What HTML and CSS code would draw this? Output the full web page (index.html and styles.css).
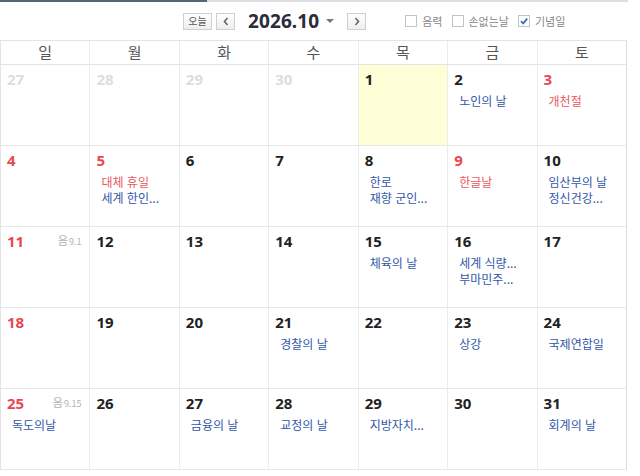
FILE: index.html
```html
<!DOCTYPE html>
<html lang="ko">
<head>
<meta charset="utf-8">
<title>2026.10 달력</title>
<link rel="stylesheet" href="styles.css">
</head>
<body>
<div class="topbar"><div class="topbar-fill"></div></div>
<div class="toolbar">
  <button class="btn btn-today">오늘</button>
  <button class="btn btn-arrow">
    <svg width="8" height="9" viewBox="0 0 8 9"><path d="M5.5 1 L2.5 4.5 L5.5 8" fill="none" stroke="#666" stroke-width="1.6"/></svg>
  </button>
  <div class="title">2026.10</div>
  <span class="caret"></span>
  <button class="btn btn-arrow">
    <svg width="8" height="9" viewBox="0 0 8 9"><path d="M2.5 1 L5.5 4.5 L2.5 8" fill="none" stroke="#666" stroke-width="1.6"/></svg>
  </button>
  <div class="checks">
    <label class="check"><span class="box"></span>음력</label>
    <label class="check"><span class="box"></span>손없는날</label>
    <label class="check"><span class="box checked"><svg width="10" height="10" viewBox="0 0 10 10"><path d="M2 5.2 L4.2 7.4 L8.2 2.6" fill="none" stroke="#3b6fc4" stroke-width="1.8"/></svg></span>기념일</label>
  </div>
</div>
<div class="cal">
  <div class="wd">일</div><div class="wd">월</div><div class="wd">화</div><div class="wd">수</div><div class="wd">목</div><div class="wd">금</div><div class="wd">토</div>

  <div class="day"><div class="num other">27</div></div>
  <div class="day"><div class="num other">28</div></div>
  <div class="day"><div class="num other">29</div></div>
  <div class="day"><div class="num other">30</div></div>
  <div class="day today"><div class="num">1</div></div>
  <div class="day"><div class="num">2</div><div class="ev">노인의 날</div></div>
  <div class="day"><div class="num red">3</div><div class="ev hol">개천절</div></div>

  <div class="day"><div class="num red">4</div></div>
  <div class="day"><div class="num red">5</div><div class="ev hol">대체 휴일</div><div class="ev">세계 한인...</div></div>
  <div class="day"><div class="num">6</div></div>
  <div class="day"><div class="num">7</div></div>
  <div class="day"><div class="num">8</div><div class="ev">한로</div><div class="ev">재향 군인...</div></div>
  <div class="day"><div class="num red">9</div><div class="ev hol">한글날</div></div>
  <div class="day"><div class="num">10</div><div class="ev">임산부의 날</div><div class="ev">정신건강...</div></div>

  <div class="day"><div class="head"><div class="num red">11</div><div class="lunar">음<span class="ln">9.1</span></div></div></div>
  <div class="day"><div class="num">12</div></div>
  <div class="day"><div class="num">13</div></div>
  <div class="day"><div class="num">14</div></div>
  <div class="day"><div class="num">15</div><div class="ev">체육의 날</div></div>
  <div class="day"><div class="num">16</div><div class="ev">세계 식량...</div><div class="ev">부마민주...</div></div>
  <div class="day"><div class="num">17</div></div>

  <div class="day"><div class="num red">18</div></div>
  <div class="day"><div class="num">19</div></div>
  <div class="day"><div class="num">20</div></div>
  <div class="day"><div class="num">21</div><div class="ev">경찰의 날</div></div>
  <div class="day"><div class="num">22</div></div>
  <div class="day"><div class="num">23</div><div class="ev">상강</div></div>
  <div class="day"><div class="num">24</div><div class="ev">국제연합일</div></div>

  <div class="day"><div class="head"><div class="num red">25</div><div class="lunar">음<span class="ln">9.15</span></div></div><div class="ev">독도의날</div></div>
  <div class="day"><div class="num">26</div></div>
  <div class="day"><div class="num">27</div><div class="ev">금융의 날</div></div>
  <div class="day"><div class="num">28</div><div class="ev">교정의 날</div></div>
  <div class="day"><div class="num">29</div><div class="ev">지방자치...</div></div>
  <div class="day"><div class="num">30</div></div>
  <div class="day"><div class="num">31</div><div class="ev">회계의 날</div></div>
</div>
</body>
</html>
```
FILE: styles.css
```css
* { box-sizing: border-box; }
body {
  margin: 0;
  background: #fff;
  font-family: "Noto Sans CJK KR", "Noto Sans", sans-serif;
  color: #222;
}
.topbar {
  height: 2px;
  width: 628px;
  background: #dcdfe3;
}
.topbar-fill {
  width: 207px;
  height: 2px;
  background: #56647a;
}
.toolbar {
  height: 38px;
  display: flex;
  align-items: center;
  padding-left: 183px;
}
.btn {
  height: 17px;
  border: 1px solid #cfcfcf;
  background: linear-gradient(#ffffff, #eeeeee);
  padding: 0;
  display: flex;
  align-items: center;
  justify-content: center;
  font-family: "Noto Sans CJK KR", sans-serif;
  font-size: 10px;
  color: #555;
  line-height: 1;
}
.btn-today { width: 29px; margin-right: 4px; }
.btn-arrow { width: 19px; }
.title {
  margin-left: 13px;
  font-family: "Noto Sans", "Noto Sans CJK KR", sans-serif;
  font-weight: 700;
  font-size: 19px;
  line-height: 22px;
  color: #2c2c3a;
  letter-spacing: 0.1px;
}
.caret {
  width: 0;
  height: 0;
  border-left: 4px solid transparent;
  border-right: 4px solid transparent;
  border-top: 4px solid #777;
  margin: 0 13px 0 7px;
}
.checks {
  display: flex;
  align-items: center;
  margin-left: 39px;
  gap: 9px;
}
.check {
  display: flex;
  align-items: center;
  font-size: 11px;
  color: #888;
  line-height: 14px;
}
.box {
  width: 12px;
  height: 12px;
  border: 1px solid #c3c3c3;
  background: #fff;
  margin-right: 5px;
  display: flex;
  align-items: center;
  justify-content: center;
}
.cal {
  width: 627px;
  display: grid;
  grid-template-columns: repeat(7, 1fr);
  grid-template-rows: 24px repeat(5, 81px);
  border-left: 1px solid #e4e4e4;
  border-top: 1px solid #e4e4e4;
}
.wd {
  border-right: 1px solid #ececec;
  border-bottom: 1px solid #e4e4e4;
  text-align: center;
  font-size: 15px;
  line-height: 22px;
  color: #555;
}
.wd:nth-child(7) { border-right-color: #dcdcdc; }
.day {
  border-right: 1px solid #ececec;
  border-bottom: 1px solid #e8e8e8;
  padding: 3px 6px 0 6px;
  overflow: hidden;
}
.day:nth-child(7n) { border-right-color: #dcdcdc; }
.today { background: #ffffd7; }
.head {
  display: flex;
  justify-content: space-between;
  align-items: center;
}
.num {
  font-family: "Noto Sans", "Noto Sans CJK KR", sans-serif;
  font-weight: 700;
  font-size: 15px;
  line-height: 22px;
  color: #222;
}
.num.red { color: #e8474f; }
.num.other { color: #dddddd; }
.lunar {
  font-size: 11px;
  color: #b0b0b0;
  margin-right: 2px;
  line-height: 14px;
}
.ln { font-size: 9px; margin-left: 1px; }
.ev {
  padding-left: 5px;
  font-size: 12px;
  line-height: 16px;
  color: #3158a8;
  white-space: nowrap;
}
.head + .ev, .num + .ev { margin-top: 3px; }
.ev.hol { color: #ea5a5e; }
```
